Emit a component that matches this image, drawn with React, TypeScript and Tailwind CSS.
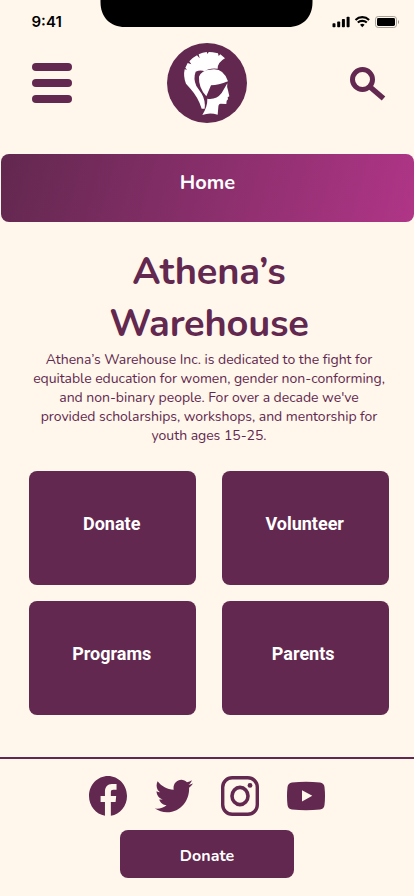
import { FaTwitter } from "react-icons/fa";

const heading = ["Athena’s", "Warehouse"];

const intro = [
  "Athena’s Warehouse Inc. is dedicated to the fight for",
  "equitable education for women, gender non-conforming,",
  "and non-binary people. For over a decade we've",
  "provided scholarships, workshops, and mentorship for",
  "youth ages 15-25.",
];

const tiles = [
  { label: "Donate", inset: "pr-[2px]" },
  { label: "Volunteer", inset: "pr-[2px]" },
  { label: "Programs", inset: "pr-[2px]" },
  { label: "Parents", inset: "pr-[5px]" },
];

function StatusBar() {
  return (
    <div className="flex h-[43px] items-start justify-between">
      <span className="w-[100px] pl-[31.5px] pt-[12px] font-['Inter',sans-serif] text-[15px] font-semibold leading-5 text-black">9:41</span>
      <svg width="213" height="27" viewBox="0 0 213 27" className="shrink-0">
        <path d="M.5 0H212.5V2C212.5 17 203 27 188 27H25C10 27 .5 17 .5 2Z" fill="#000" />
      </svg>
      <svg width="101" height="32" viewBox="313 0 101 32" className="shrink-0">
        <g fill="#000">
          <rect x="332.5" y="23.3" width="3" height="4" rx=".8" />
          <rect x="337.2" y="21.5" width="3" height="5.8" rx=".8" />
          <rect x="341.9" y="19" width="3" height="8.3" rx=".8" />
          <rect x="346.6" y="16.7" width="3" height="10.6" rx=".8" />
          <path d="M362.3 27.2l-2.3-2.4a3.3 3.3 0 0 1 4.6 0z" />
          <rect x="377" y="18" width="18" height="8" rx="1.4" />
        </g>
        <path d="M355.5 19.9a9.8 9.8 0 0 1 13.6 0M357.8 22.6a6.6 6.6 0 0 1 9 0" fill="none" stroke="#000" strokeWidth="2.1" />
        <rect x="375.5" y="16.5" width="21" height="11" rx="2.7" fill="none" stroke="#a5a199" />
        <path d="M398 20v4c1.3-.5 1.3-3.5 0-4z" fill="#8d8982" />
      </svg>
    </div>
  );
}

function Logo() {
  return (
    <svg width="80" height="80" viewBox="36 24 240 240">
      <circle cx="156" cy="144" r="120" fill="#62284f" />
      <g fill="#fff">
        <path d="M210 70L196 58 191 63 189 55 173 52 161 51 158 57 155 51 143 53 131 58 134 70 126 61 113 69 103 79 109 88 98 84 91 98 96 104 89 103Q84 125 93 146L107 162Q130 188 140 221L149 221Q152 196 140 176L124 153Q114 130 122 110Q136 103 150 109Q162 98 188 101Q188 82 210 70Z" />
        <path d="M132 125Q140 105 165 104 205 96 219 139 190 151 168 151L154 184Q130 157 132 125Z" />
        <path d="M217 145Q215 155 219 166L223 184 218 187 219 193 215 197 214 207 197 206Q190 207 190 216L188 239Q164 231 142 240 158 213 157 191 184 195 200 174Z" />
      </g>
    </svg>
  );
}

function Header() {
  return (
    <header className="flex h-[111px] items-start pl-8">
      <div className="mt-5 flex w-10 flex-col gap-2">
        <i className="h-2 rounded-full bg-[#62284f]" />
        <i className="h-2 rounded-full bg-[#62284f]" />
        <i className="h-2 rounded-full bg-[#62284f]" />
      </div>
      <div className="ml-[95px]"><Logo /></div>
      <svg width="37" height="36" viewBox="349 66 37 36" className="ml-[102px] mt-[23px]" fill="none" stroke="#62284f">
        <circle cx="362.5" cy="79.5" r="10" strokeWidth="5" />
        <path d="M369.5 86.5L383.5 98.5" strokeWidth="5.4" />
      </svg>
    </header>
  );
}

function Social() {
  return (
    <div className="flex h-[71px] items-start justify-center gap-7 pt-[17px] text-[#62284f]">
      <svg width="38" height="40" viewBox="2 2 20 20" preserveAspectRatio="none">
        <path d="M22 12c0-5.52-4.48-10-10-10S2 6.48 2 12c0 4.98 3.66 9.13 8.4 9.85V15H8.1v-3h2.3V9.8C10.4 7.5 11.8 6 14 6h2.5v2.9h-1.7c-.9 0-1.3.4-1.3 1.2V12h2.8l-.3 3h-2.5v6.9C18.4 21.1 22 17 22 12z" fill="currentColor" />
      </svg>
      <svg width="38" height="40" viewBox="0 0 512 512" preserveAspectRatio="none"><FaTwitter size={512} /></svg>
      <svg width="38" height="40" viewBox="0 0 38 40">
        <rect x="1.7" y="1.7" width="34.6" height="36.6" rx="9.5" fill="none" stroke="currentColor" strokeWidth="3.4" />
        <ellipse cx="19" cy="20" rx="8" ry="8.6" fill="none" stroke="currentColor" strokeWidth="3.6" />
        <circle cx="29" cy="9.4" r="2.4" fill="currentColor" />
      </svg>
      <svg width="38" height="40" viewBox="0 0 38 40">
        <path fillRule="evenodd" d="M5 6.5Q19 5.2 33 6.5Q37 7 37.5 11Q38.5 20 37.5 29Q37 33 33 33.5Q19 34.8 5 33.5Q1 33 .5 29Q-.5 20 .5 11Q1 7 5 6.5ZM15 14.2V25.4L25.3 19.8Z" fill="currentColor" />
      </svg>
    </div>
  );
}

export default function App() {
  return (
    <main className="h-[896px] w-[414px] overflow-hidden bg-[#fff7eb] font-['Nunito','Lato',sans-serif] text-[#62284f]">
      <StatusBar />
      <Header />
      <div className="ml-px flex h-[68px] items-start justify-center rounded-lg bg-[linear-gradient(105deg,#62284f,#b03587)] pt-[15px] text-[20px] font-bold leading-7 text-white">Home</div>
      <h1 className="h-[128px] pl-1 pt-[24px] text-center text-[38px] font-bold leading-[52px] tracking-[-0.2px]">
        {heading.map((line) => (
          <span key={line} className="block">{line}</span>
        ))}
      </h1>
      <p className="h-[121px] pl-1 text-center text-[14px] leading-[19px] tracking-[-0.03px]">
        {intro.map((line) => (
          <span key={line} className="block whitespace-nowrap">{line}</span>
        ))}
      </p>
      <div className="ml-[29px] grid w-[360.4px] grid-cols-[167.4px_167.4px] gap-x-[25.6px] gap-y-4 font-['Roboto',sans-serif] text-[18px] font-bold text-white">
        {tiles.map((t) => (
          <button key={t.label} className={`flex h-[114px] items-center justify-center rounded-lg bg-[#62284f] pb-2.5 ${t.inset}`}>{t.label}</button>
        ))}
      </div>
      <footer className="mt-[42px] border-t-2 border-[#62284f]">
        <Social />
        <button className="mx-auto flex h-12 w-[174px] items-center justify-center rounded-lg bg-[#62284f] pt-1 text-[16px] font-bold text-white">Donate</button>
      </footer>
    </main>
  );
}
